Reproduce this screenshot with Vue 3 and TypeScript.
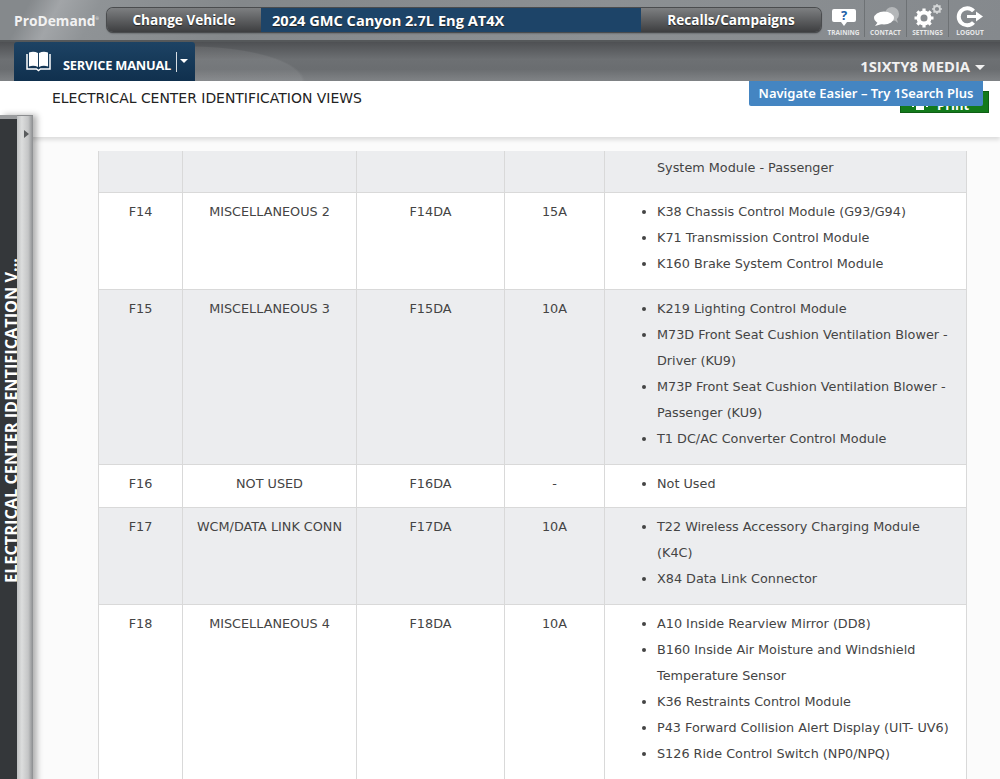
<script setup lang="ts">
interface Row {
  fuse: string
  name: string
  code: string
  amps: string
  items: string[]
  shade: boolean
  tight?: boolean
}
const rows: Row[] = [
  { fuse: 'F14', name: 'MISCELLANEOUS 2', code: 'F14DA', amps: '15A', shade: false, items: ['K38 Chassis Control Module (G93/G94)', 'K71 Transmission Control Module', 'K160 Brake System Control Module'] },
  { fuse: 'F15', name: 'MISCELLANEOUS 3', code: 'F15DA', amps: '10A', shade: true, items: ['K219 Lighting Control Module', 'M73D Front Seat Cushion Ventilation Blower - Driver (KU9)', 'M73P Front Seat Cushion Ventilation Blower - Passenger (KU9)', 'T1 DC/AC Converter Control Module'] },
  { fuse: 'F16', name: 'NOT USED', code: 'F16DA', amps: '-', shade: false, tight: true, items: ['Not Used'] },
  { fuse: 'F17', name: 'WCM/DATA LINK CONN', code: 'F17DA', amps: '10A', shade: true, items: ['T22 Wireless Accessory Charging Module (K4C)', 'X84 Data Link Connector'] },
  { fuse: 'F18', name: 'MISCELLANEOUS 4', code: 'F18DA', amps: '10A', shade: false, items: ['A10 Inside Rearview Mirror (DD8)', 'B160 Inside Air Moisture and Windshield Temperature Sensor', 'K36 Restraints Control Module', 'P43 Forward Collision Alert Display (UIT- UV6)', 'S126 Ride Control Switch (NP0/NPQ)'] },
]
</script>

<template>
  <div class="page">
    <header class="top">
      <div class="bar1">
        <div class="logo">ProDemand<sup>®</sup></div>
        <div class="vehicle">
          <div class="vbtn change">Change Vehicle</div>
          <div class="vname">2024 GMC Canyon 2.7L Eng AT4X</div>
          <div class="vbtn recalls">Recalls/Campaigns</div>
        </div>
        <nav class="tools">
          <div class="tool">
            <svg width="32" height="27" viewBox="0 0 32 27"><path d="M6 7h20a2 2 0 0 1 2 2v9a2 2 0 0 1-2 2h-7l-3 4-3-4H6a2 2 0 0 1-2-2V9a2 2 0 0 1 2-2z" fill="#fff"/><text x="16" y="18" text-anchor="middle" class="q">?</text></svg>
            <span>TRAINING</span>
          </div>
          <div class="tool">
            <svg width="32" height="27" viewBox="0 0 32 27"><ellipse cx="22" cy="12" rx="7" ry="7" fill="#b4b7b9"/><path d="M23 17l5 4-2-7z" fill="#b4b7b9"/><ellipse cx="14" cy="16" rx="10" ry="6.500" fill="#fff"/><path d="M8 20l-3 4 7-2z" fill="#fff"/></svg>
            <span>CONTACT</span>
          </div>
          <div class="tool">
            <svg width="32" height="27" viewBox="0 0 32 27"><circle cx="12" cy="16" r="5.500" fill="none" stroke="#fff" stroke-width="4"/><path d="M12 6.500v3.500M12 22v3.500M2.500 16H6M18 16h3.500M5.300 9.300l2.500 2.500M16.200 20.200l2.500 2.500M5.300 22.700l2.500-2.500M16.200 11.800l2.500-2.500" stroke="#fff" stroke-width="3.200"/><circle cx="25" cy="7" r="3" fill="none" stroke="#d4d6d7" stroke-width="1.800"/><path d="M25 2v2M25 10v2M20 7h2M28 7h2M21.500 3.500l1.400 1.400M27.100 9.100l1.400 1.400M21.500 10.500l1.400-1.400M27.100 4.900l1.400-1.400" stroke="#d4d6d7" stroke-width="1.500"/></svg>
            <span>SETTINGS</span>
          </div>
          <div class="tool last">
            <svg width="32" height="27" viewBox="0 0 32 27"><path d="M19.500 9a8.500 8.500 0 1 0 0 11.500" fill="none" stroke="#fff" stroke-width="4"/><path d="M13 14.500h11" stroke="#fff" stroke-width="3"/><path d="M22 9.500l7 5-7 5z" fill="#fff"/></svg>
            <span>LOGOUT</span>
          </div>
        </nav>
      </div>
      <div class="bar2">
        <div class="manual">
          <svg class="book" width="25" height="21" viewBox="0 0 25 21"><path d="M1 3v15h9.500l2 1.500 2-1.500H24V3" fill="none" stroke="#fff" stroke-width="1.500"/><path d="M3 1.500c3-1 6-1 9 .5v14c-3-1.500-6-1.500-9-.5zM22 1.500c-3-1-6-1-9 .5v14c3-1.500 6-1.500 9-.5z" fill="#fff"/></svg>
          <span class="mtext">SERVICE MANUAL</span>
          <span class="msep"></span>
          <span class="mcaret"></span>
        </div>
        <div class="account">1SIXTY8 MEDIA<span class="acaret"></span></div>
      </div>
    </header>

    <div class="tip">Navigate Easier – Try 1Search Plus</div>

    <section class="titlebar">
      <h1>ELECTRICAL CENTER IDENTIFICATION VIEWS</h1>
      <div class="print">
        <svg class="printer" width="16" height="18" viewBox="0 0 16 18"><path d="M4 1h8v5H4zM0 6h16v8h-2v-3H2v3H0zM4 12h8v5H4z" fill="#fff"/></svg>
        <span>Print</span>
      </div>
    </section>

    <div class="body">
      <aside class="side">
        <div class="dark"><span class="vert">ELECTRICAL CENTER IDENTIFICATION V...</span></div>
        <div class="handle"><i></i></div>
      </aside>
      <main class="main">
        <table>
          <colgroup>
            <col class="c1" /><col class="c2" /><col class="c3" /><col class="c4" /><col class="c5" />
          </colgroup>
          <tbody>
            <tr class="shade first">
              <td></td><td></td><td></td><td></td>
              <td class="list"><div class="cont">System Module - Passenger</div></td>
            </tr>
            <tr v-for="r in rows" :key="r.fuse" :class="{ shade: r.shade, tight: r.tight }">
              <td>{{ r.fuse }}</td>
              <td>{{ r.name }}</td>
              <td>{{ r.code }}</td>
              <td>{{ r.amps }}</td>
              <td class="list">
                <ul><li v-for="it in r.items" :key="it">{{ it }}</li></ul>
              </td>
            </tr>
          </tbody>
        </table>
      </main>
    </div>
  </div>
</template>

<style>
html, body { margin: 0; height: 100%; overflow: hidden; background: #fff; }
</style>

<style scoped>
.page {
  position: relative;
  width: 1000px;
  height: 779px;
  overflow: hidden;
  background: #fbfbfb;
  font-family: "DejaVu Sans", "Open Sans", sans-serif;
  color: #444;
}
.top { height: 81px; }
.bar1 {
  height: 42px;
  display: flex;
  align-items: flex-start;
  background: linear-gradient(118deg, #85898c 0, #85898c 3%, #a2a5a8 6%, #8f9396 10%, #84888b 24%, #8c9093 60%, #85898d 100%);
  border-bottom: 2px solid #55585a;
  box-sizing: border-box;
}
.logo {
  width: 107px;
  box-sizing: border-box;
  padding: 11px 0 0 14px;
  color: #f2f2f2;
  font: bold 13.800px/16px "Open Sans", sans-serif;
  white-space: nowrap;
}
.logo sup { font-size: 4px; font-weight: 400; vertical-align: 6px; }
.vehicle {
  margin-top: 8px;
  width: 714px;
  height: 24px;
  display: flex;
  border-radius: 6px;
  overflow: hidden;
  box-shadow: 0 0 0 1px #4a4c4e, 0 1px 2px #3c3e40;
  color: #fff;
  font: bold 13.600px/24px "Open Sans", sans-serif;
  text-shadow: 0 1px 1px #222;
}
.vbtn { text-align: center; background: linear-gradient(#7d7f81, #3d3e40); }
.change { width: 154px; }
.vname { width: 380px; padding-left: 11px; box-sizing: border-box; background: #1d4468; white-space: nowrap; font-size: 14.600px; }
.recalls { width: 180px; }
.tools { display: flex; margin-left: 2px; }
.tool {
  width: 42px;
  height: 37px;
  padding-top: 2px;
  box-sizing: border-box;
  display: flex;
  flex-direction: column;
  align-items: center;
  border-right: 1px solid #6e7275;
  color: #e6e7e8;
  font: bold 6.500px/8px "Open Sans", sans-serif;
}
.tool svg { display: block; flex: none; }
.tool.last { border-right: 0; }
.q { fill: #1d5fa8; font: bold 13px "Open Sans", sans-serif; }
.bar2 {
  height: 39px;
  display: flex;
  justify-content: space-between;
  align-items: flex-end;
  padding: 0 15px 0 14px;
  background:
    radial-gradient(ellipse 115px 36px at 190px 40px, rgba(255, 255, 255, 0.07) 97%, rgba(255, 255, 255, 0) 100%),
    linear-gradient(#4e5053, #6d7073 45%, #6a6d70 70%, #808386);
}
.manual {
  position: relative;
  width: 181px;
  height: 39px;
  box-sizing: border-box;
  border-radius: 3px 3px 0 0;
  background: linear-gradient(#1d4364, #10304e);
  color: #fff;
  display: flex;
  align-items: flex-start;
}
.book { margin: 9px 0 0 12px; flex: none; }
.mtext { margin: 15px 0 0 12px; font: bold 12.800px/17px "Open Sans", sans-serif; letter-spacing: -0.2px; white-space: nowrap; }
.msep { width: 1px; height: 20px; margin: 10px 0 0 5px; background: #d6dde3; flex: none; }
.mcaret {
  margin: 17px 0 0 3px;
  border-left: 4px solid transparent;
  border-right: 4px solid transparent;
  border-top: 4px solid #fff;
  flex: none;
}
.account {
  height: 30px;
  color: #f1f1f1;
  font: bold 14.800px/30px "Open Sans", sans-serif;
  white-space: nowrap;
}
.acaret {
  display: inline-block;
  margin-left: 5px;
  vertical-align: 2px;
  border-left: 5px solid transparent;
  border-right: 5px solid transparent;
  border-top: 5px solid #f1f1f1;
}
.tip {
  position: absolute;
  z-index: 3;
  left: 749px;
  top: 81px;
  width: 234px;
  height: 25px;
  border-radius: 0 0 2px 2px;
  background: #4485c2;
  color: #fff;
  font: 600 13px/25px "Noto Sans", sans-serif;
  text-align: center;
  white-space: nowrap;
}
.titlebar {
  height: 56px;
  box-sizing: border-box;
  padding: 8px 11px 0 52px;
  display: flex;
  justify-content: space-between;
  align-items: flex-start;
  background: #fff;
  box-shadow: 0 3px 4px rgba(0, 0, 0, 0.12);
  position: relative;
}
h1 {
  margin: 0;
  color: #222;
  font: 400 13.950px/18px "DejaVu Sans", sans-serif;
  white-space: nowrap;
}
.print {
  margin-top: 2px;
  width: 89px;
  height: 22px;
  box-sizing: border-box;
  background: #137a1b;
  border: 1px solid #0e5f14;
  color: #fff;
  font: bold 13px/26px "Open Sans", sans-serif;
  display: flex;
  gap: 9px;
  padding-left: 11px;
  overflow: hidden;
}
.printer { flex: none; margin-top: 1px; }
.body { display: flex; align-items: flex-start; }
.side {
  flex: none;
  margin-top: -22px;
  width: 33px;
  height: 700px;
  display: flex;
  box-shadow: 4px 0 6px rgba(0, 0, 0, 0.3);
  position: relative;
}
.dark {
  width: 17px;
  background: #34373a;
  border-top: 4px solid #9a9c9e;
  box-sizing: border-box;
  position: relative;
}
.vert {
  position: absolute;
  left: 2px;
  bottom: 232px;
  writing-mode: vertical-rl;
  transform: rotate(180deg);
  color: #fff;
  font: bold 16.300px/18px "Open Sans", sans-serif;
  white-space: nowrap;
}
.handle {
  width: 16px;
  box-sizing: border-box;
  background: linear-gradient(90deg, #bfc1c2, #dcdddd 30%, #c4c5c6 70%, #8b8d8f);
  border-top: 1px solid #8b8d8f;
  position: relative;
}
.handle i {
  position: absolute;
  left: 7px;
  top: 14px;
  border-top: 4px solid transparent;
  border-bottom: 4px solid transparent;
  border-left: 5px solid #5a5c5e;
}
.main { margin: 14px 0 0 65px; }
table {
  width: 868px;
  border-collapse: collapse;
  table-layout: fixed;
  font-size: 12.800px;
  line-height: 26px;
  color: #444;
  border-left: 1px solid #ddd;
  border-right: 1px solid #ddd;
}
.c1 { width: 84px; }
.c2 { width: 174px; }
.c3 { width: 148px; }
.c4 { width: 100px; }
.c5 { width: 362px; }
td {
  border: 1px solid #d9d9d9;
  padding: 6px 5px 0;
  text-align: center;
  vertical-align: top;
  background: #fff;
}
tr.shade td { background: #ecedef; }
tr.first td { border-top: 0; padding-top: 4px; }
td.list { text-align: left; padding: 6px 12px 12px 0; }
tr.first td.list { padding: 4px 12px 11px 0; }
tr.tight td.list { padding-bottom: 10px; }
ul { margin: 0; padding: 0 0 0 52px; list-style: disc; }
.cont { padding-left: 52px; }
</style>
